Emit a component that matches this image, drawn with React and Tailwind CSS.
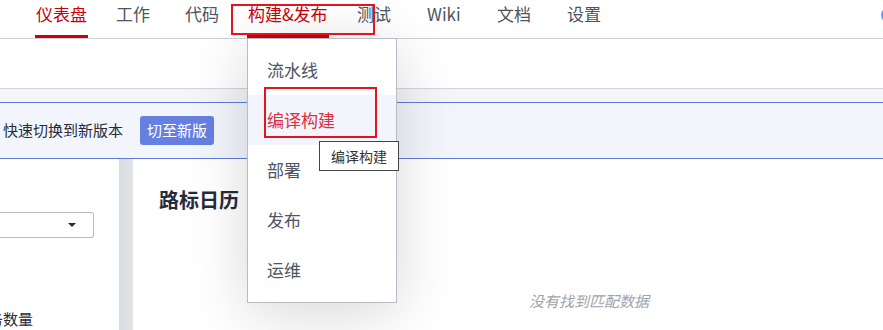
import React from "react";

const navItems = [
  { label: "仪表盘", w: "w-[80px]", active: true },
  { label: "工作", w: "w-[69px]" },
  { label: "代码", w: "w-[63px]" },
  { label: "构建&发布", w: "w-[109px]", active: true },
  { label: "测试", w: "w-[70px]" },
  { label: "Wiki", w: "w-[70px]" },
  { label: "文档", w: "w-[70px]" },
  { label: "设置", w: "w-[70px]" },
];

const menuItems = ["流水线", "编译构建", "部署", "发布", "运维"];

const NavBar = () => (
  <div className="flex h-[39px] shrink-0 items-start border-b border-[#cfd0d3] bg-white pl-[35px]">
    {navItems.map((item) => (
      <div key={item.label} className={"shrink-0 " + item.w}>
        <div
          className={
            "inline-flex h-[38px] flex-col items-start pt-[3px] text-[17px] leading-[22px] " +
            (item.active ? "text-[#c7000b]" : "text-[#4e5461]")
          }
        >
          <span className="px-[1px]">{item.label}</span>
          <span className={"mt-auto h-[3px] w-full " + (item.active ? "bg-[#c7000b]" : "bg-transparent")} />
        </div>
      </div>
    ))}
    <div className="ml-auto mr-[-14px] mt-[7px] h-[16px] w-[16px] shrink-0 rounded-full bg-[#5e9cf3]" />
  </div>
);

const Notice = () => (
  <div className="mt-[13px] flex h-[57px] shrink-0 items-center border-y border-[#5e7ce0] bg-[#f2f5fc]">
    <span className="ml-[-12px] text-[15px] text-[#252b3a]">”快速切换到新版本</span>
    <button className="ml-[17px] h-[29px] w-[74px] rounded-[3px] bg-[#6580e0] text-[15px] text-white">
      切至新版
    </button>
  </div>
);

const Body = () => (
  <div className="flex h-[171px] shrink-0">
    <div className="flex w-[119px] flex-col bg-white">
      <div className="mt-[53px] flex h-[31px] w-[94px] items-center justify-end rounded-r-[3px] border border-l-0 border-[#b8bac0] pr-[17px]">
        <span className="h-0 w-0 border-x-[4px] border-t-[4px] border-x-transparent border-t-[#252b3a]" />
      </div>
      <span className="ml-[-12px] mt-[70px] whitespace-nowrap text-[15px] text-[#252b3a]">务数量</span>
    </div>
    <div className="w-[14px] bg-gradient-to-r from-[#d9dce0] to-[#e2e4e7]" />
    <div className="flex flex-1 flex-col bg-white pl-[26px]">
      <h2 className="mt-[29px] text-[20px] font-bold leading-[24px] text-[#252b3a]">路标日历</h2>
      <p className="ml-[370px] mt-[78px] text-[15px] italic text-[#9ea3ad]">没有找到匹配数据</p>
    </div>
  </div>
);

const DropMenu = () => (
  <div className="absolute left-[247px] top-[38px] flex h-[265px] w-[150px] flex-col border border-[#b9bac6] bg-white pt-[6px] shadow-[0_10px_60px_rgba(0,0,0,0.16)]">
    {menuItems.map((m) => (
      <div
        key={m}
        className={
          "flex h-[50px] shrink-0 items-center pl-[19px] text-[17px] " +
          (m === "编译构建" ? "bg-[#f2f5fc] text-[#d9303a]" : "text-[#4e5461]")
        }
      >
        {m}
      </div>
    ))}
  </div>
);

export default function App() {
  return (
    <div
      className="relative flex h-[330px] w-[883px] flex-col overflow-hidden bg-[#f3f5f8]"
      style={{ fontFamily: '"Noto Sans CJK SC", "Noto Sans", sans-serif' }}
    >
      <NavBar />
      <div className="h-[50px] shrink-0 border-b border-[#d3d4d7] bg-white" />
      <Notice />
      <Body />
      <DropMenu />
      <div className="absolute left-[319px] top-[141px] flex h-[30px] w-[80px] items-center justify-center border border-[#444] bg-white text-[14px] text-[#333]">
        编译构建
      </div>
      <div className="absolute left-[231px] top-[4px] h-[31px] w-[144px] border-2 border-[#e5131d]" />
      <div className="absolute left-[264px] top-[87px] h-[51px] w-[113px] border-2 border-[#e5131d]" />
    </div>
  );
}
